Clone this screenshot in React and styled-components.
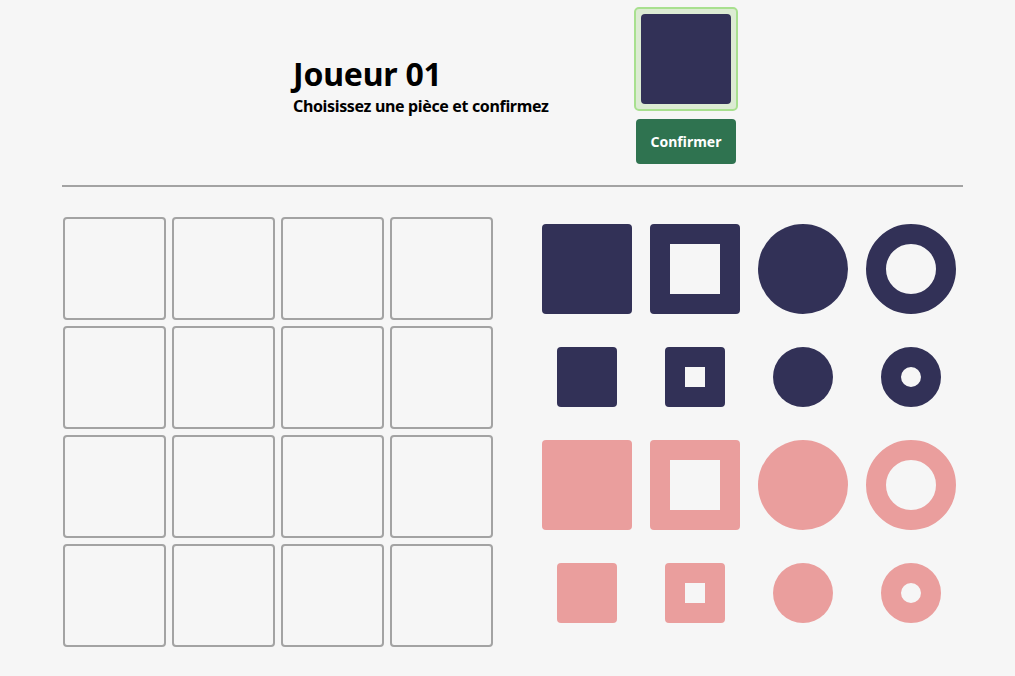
import React from 'react';
import styled, { createGlobalStyle, css } from 'styled-components';

const NAVY = '#323157';
const PINK = '#ea9e9d';

const GlobalStyle = createGlobalStyle`
  body {
    margin: 0;
    background: #f6f6f6;
    font-family: 'Noto Sans', 'DejaVu Sans', sans-serif;
    color: #000;
  }
`;

const PIECES = [
  { size: 'large', shape: 'square', hollow: false, color: NAVY },
  { size: 'large', shape: 'square', hollow: true, color: NAVY },
  { size: 'large', shape: 'circle', hollow: false, color: NAVY },
  { size: 'large', shape: 'circle', hollow: true, color: NAVY },
  { size: 'small', shape: 'square', hollow: false, color: NAVY },
  { size: 'small', shape: 'square', hollow: true, color: NAVY },
  { size: 'small', shape: 'circle', hollow: false, color: NAVY },
  { size: 'small', shape: 'circle', hollow: true, color: NAVY },
  { size: 'large', shape: 'square', hollow: false, color: PINK },
  { size: 'large', shape: 'square', hollow: true, color: PINK },
  { size: 'large', shape: 'circle', hollow: false, color: PINK },
  { size: 'large', shape: 'circle', hollow: true, color: PINK },
  { size: 'small', shape: 'square', hollow: false, color: PINK },
  { size: 'small', shape: 'square', hollow: true, color: PINK },
  { size: 'small', shape: 'circle', hollow: false, color: PINK },
  { size: 'small', shape: 'circle', hollow: true, color: PINK },
];

export default function App() {
  return (
    <>
      <GlobalStyle />
      <Page>
        <Header>
          <TitleBlock>
            <Title>Joueur 01</Title>
            <Subtitle>Choisissez une pièce et confirmez</Subtitle>
          </TitleBlock>
          <SelectedColumn>
            <SelectedBox>
              <Piece size="large" shape="square" color={NAVY} />
            </SelectedBox>
            <ConfirmButton>Confirmer</ConfirmButton>
          </SelectedColumn>
        </Header>
        <Divider />
        <GameArea>
          <Board>
            {Array.from({ length: 16 }).map((_, i) => (
              <BoardCell key={i} />
            ))}
          </Board>
          <PiecesGrid>
            {PIECES.map((p, i) => (
              <PieceSlot key={i}>
                <Piece size={p.size} shape={p.shape} hollow={p.hollow} color={p.color} />
              </PieceSlot>
            ))}
          </PiecesGrid>
        </GameArea>
      </Page>
    </>
  );
}

const Page = styled.div`
  width: 901px;
  padding: 7px 0 0 62px;
`;

const Header = styled.header`
  display: flex;
  flex-direction: row;
  align-items: center;
  justify-content: center;
  gap: 85px;
  padding-left: 6px;
`;

const TitleBlock = styled.div`
  width: 256px;
  white-space: nowrap;
`;

const Title = styled.h1`
  margin: 0;
  font-size: 32px;
  font-weight: 700;
  line-height: 36px;
  letter-spacing: -0.2px;
`;

const Subtitle = styled.p`
  margin: 4px 0 0;
  font-size: 16px;
  font-weight: 700;
  line-height: 20px;
  letter-spacing: -0.35px;
`;

const SelectedColumn = styled.div`
  display: flex;
  flex-direction: column;
  align-items: center;
  gap: 8px;
`;

const SelectedBox = styled.div`
  width: 104px;
  height: 104px;
  box-sizing: border-box;
  padding: 5px;
  border: 2px solid #a8e08f;
  border-radius: 5px;
  background: #dcebd3;
`;

const ConfirmButton = styled.button`
  width: 100px;
  height: 45px;
  border: 0;
  border-radius: 4px;
  background: #2f7350;
  color: #fff;
  font-family: inherit;
  font-size: 14px;
  font-weight: 700;
  cursor: pointer;
`;

const Divider = styled.hr`
  margin: 21px 0 0;
  border: 0;
  height: 2px;
  background: #a3a3a3;
`;

const GameArea = styled.div`
  display: flex;
  flex-direction: row;
  align-items: flex-start;
  gap: 40px;
  padding-left: 1px;
  margin-top: 28px;
`;

const Board = styled.div`
  display: grid;
  grid-template-columns: repeat(4, 103px);
  grid-auto-rows: 103px;
  gap: 6px;
  margin-top: 2px;
`;

const BoardCell = styled.div`
  box-sizing: border-box;
  border: 2px solid #a3a3a3;
  border-radius: 4px;
`;

const PiecesGrid = styled.div`
  display: grid;
  grid-template-columns: repeat(4, 108px);
  grid-auto-rows: 108px;
`;

const PieceSlot = styled.div`
  display: flex;
  align-items: center;
  justify-content: center;
`;

const Piece = styled.div`
  box-sizing: border-box;
  width: ${({ size }) => (size === 'large' ? 90 : 60)}px;
  height: ${({ size }) => (size === 'large' ? 90 : 60)}px;
  border-radius: ${({ shape }) => (shape === 'circle' ? '50%' : '4px')};
  ${({ hollow, color }) =>
    hollow
      ? css`
          border: 20px solid ${color};
          background: transparent;
        `
      : css`
          background: ${color};
        `}
`;
